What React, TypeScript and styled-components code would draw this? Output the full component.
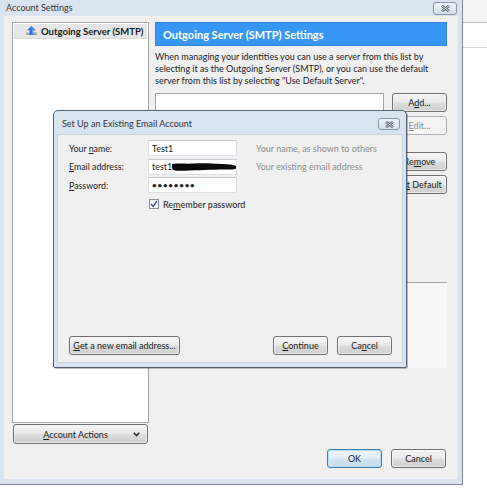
import React from "react";
import styled, { createGlobalStyle, css } from "styled-components";

const GlobalStyle = createGlobalStyle`
  html, body { margin: 0; padding: 0; background: #ffffff; }
  body {
    font-family: Lato, "Noto Sans", "DejaVu Sans", sans-serif;
    font-size: 9px;
    color: #1b1b1b;
  }
  * { box-sizing: border-box; }
`;

const Desktop = styled.div`
  position: relative;
  width: 487px;
  height: 500px;
  overflow: hidden;
  background: #ffffff;
`;

/* another application window peeking out at the right edge */
const BackWindow = styled.div`
  position: absolute;
  left: 463px;
  top: 0;
  width: 24px;
  display: flex;
  flex-direction: column;
`;

const BackBar = styled.div<{ $h: number; $line: string; $bg: string }>`
  height: ${(p) => p.$h}px;
  background: ${(p) => p.$bg};
  border-bottom: 1px solid ${(p) => p.$line};
`;

const MainWindow = styled.div`
  position: absolute;
  left: 0;
  top: 0;
  width: 463px;
  height: 485px;
  background: #dae4f0;
  border-right: 1px solid #7e8896;
  border-bottom: 1px solid #7e8896;
  padding: 0 4px 5px 4px;
  display: flex;
  flex-direction: column;
`;

const TitleBar = styled.div<{ $h: number }>`
  height: ${(p) => p.$h}px;
  flex: none;
  display: flex;
  align-items: flex-start;
  justify-content: space-between;
`;

const TitleText = styled.div<{ $top: number; $left: number }>`
  margin-top: ${(p) => p.$top}px;
  margin-left: ${(p) => p.$left}px;
  font-size: 9px;
  line-height: 12px;
  color: #353535;
  white-space: nowrap;
`;

const CloseButton = styled.div<{ $w: number; $h: number; $top: number; $right: number }>`
  width: ${(p) => p.$w}px;
  height: ${(p) => p.$h}px;
  margin-top: ${(p) => p.$top}px;
  margin-right: ${(p) => p.$right}px;
  border: 1px solid #8796a9;
  border-radius: 3px;
  background: linear-gradient(#eef3f9, #d6dfeb);
  display: flex;
  align-items: center;
  justify-content: center;
`;

const Client = styled.div`
  flex: 1;
  background: #f0f0f0;
  display: flex;
  gap: 6px;
  padding: 6px 11px 11px 8px;
`;

const LeftColumn = styled.div`
  width: 137px;
  flex: none;
  display: flex;
  flex-direction: column;
  gap: 1px;
  padding-bottom: 24px;
`;

const AccountList = styled.div`
  flex: 1;
  background: #ffffff;
  border: 1px solid #a5a5a5;
  padding: 1px;
`;

const ListRow = styled.div`
  height: 15px;
  display: flex;
  align-items: center;
  gap: 4px;
  padding-left: 12px;
  background: #e6e6e6;
  border-bottom: 1px solid #dadada;
  font-weight: 700;
  font-size: 9.5px;
  color: #1a1a1a;
  white-space: nowrap;
`;

const buttonBase = css`
  display: flex;
  align-items: center;
  justify-content: center;
  border: 1px solid #707070;
  border-radius: 3px;
  background: linear-gradient(#f3f3f3 0%, #ebebeb 48%, #dddddd 52%, #cfcfcf 100%);
  box-shadow: inset 0 0 0 1px rgba(255, 255, 255, 0.55);
  font-size: 9px;
  color: #1b1b1b;
  white-space: nowrap;
`;

const ButtonFrame = styled.div<{ $w?: number; $h?: number; $default?: boolean; $disabled?: boolean }>`
  ${buttonBase};
  width: ${(p) => (p.$w ? `${p.$w}px` : "auto")};
  height: ${(p) => p.$h ?? 19}px;
  ${(p) =>
    p.$default &&
    css`
      border-color: #3c7fb1;
      box-shadow: inset 0 0 0 1px #b7dcf4;
      background: linear-gradient(#eef6fc 0%, #e2eef8 48%, #d2e4f3 52%, #c6dcef 100%);
    `}
  ${(p) =>
    p.$disabled &&
    css`
      border-color: #adb2b5;
      background: #f4f4f4;
      box-shadow: none;
      color: #8a8a8a;
    `}
`;

const Button = ({
  children,
  ...rest
}: {
  children: React.ReactNode;
  $w?: number;
  $h?: number;
  $default?: boolean;
  $disabled?: boolean;
}) => (
  <ButtonFrame {...rest}>
    <span>{children}</span>
  </ButtonFrame>
);

const ActionsButton = styled.div`
  ${buttonBase};
  height: 20px;
  margin: 0 1px;
  justify-content: space-between;
  padding: 0 7px 0 0;
`;

const ActionsLabel = styled.span`
  flex: 1;
  text-align: center;
  padding-left: 4px;
`;

const Key = styled.span`
  text-decoration: underline;
  text-underline-offset: 1px;
`;

const RightColumn = styled.div`
  flex: 1;
  display: flex;
  flex-direction: column;
`;

const Header = styled.div`
  height: 24px;
  flex: none;
  background: #3797f5;
  border: 1px solid #2f85dd;
  display: flex;
  align-items: center;
  padding-left: 7px;
  color: #ffffff;
  font-weight: 700;
  font-size: 11px;
  white-space: nowrap;
`;

const Description = styled.p`
  margin: 5px 0 0 0;
  font-size: 9px;
  line-height: 12px;
  color: #1b1b1b;
  white-space: nowrap;
`;

const ServerArea = styled.div`
  margin-top: 6px;
  display: flex;
  gap: 8px;
  height: 183px;
`;

const ServerList = styled.div`
  flex: 1;
  background: #ffffff;
  border: 1px solid #a5a5a5;
`;

const ButtonStack = styled.div`
  width: 55px;
  display: flex;
  flex-direction: column;
`;

const Gap = styled.div<{ $h: number }>`
  height: ${(p) => p.$h}px;
  flex: none;
`;

const Details = styled.div`
  margin-top: 6px;
  height: 86px;
  background: #f7f7f7;
  border-top: 1px solid #a5a5a5;
`;

const Footer = styled.div`
  margin-top: auto;
  display: flex;
  justify-content: flex-end;
  gap: 9px;
  padding-right: 1px;
`;

/* ---------- dialog ---------- */

const Dialog = styled.div`
  position: absolute;
  left: 53px;
  top: 110px;
  width: 354px;
  height: 258px;
  background: #d8e4f2;
  border: 1px solid #55616f;
  border-radius: 5px 5px 2px 2px;
  box-shadow: 1px 1px 0 rgba(0, 0, 0, 0.25);
  padding: 0 3px 4px 3px;
  display: flex;
  flex-direction: column;
`;

const DialogBody = styled.div`
  flex: 1;
  background: #f0f0f0;
  border: 1px solid #c4d2e3;
  padding: 5px 10px 7px 11px;
  display: flex;
  flex-direction: column;
`;

const FormGrid = styled.div`
  display: grid;
  grid-template-columns: 79px 89px auto;
  grid-auto-rows: 16px;
  row-gap: 2.5px;
  align-items: center;
`;

const Label = styled.div`
  font-size: 8.8px;
  color: #1b1b1b;
  white-space: nowrap;
`;

const TextBox = styled.div`
  height: 16px;
  background: #ffffff;
  border: 1px solid #dcdfe4;
  border-top-color: #c6c9cf;
  display: flex;
  align-items: center;
  padding-left: 3px;
  font-size: 9px;
  color: #1b1b1b;
  overflow: hidden;
  white-space: nowrap;
`;

const Dots = styled.span`
  font-size: 8px;
  letter-spacing: 0.8px;
  font-weight: 700;
`;

const Hint = styled.div`
  margin-left: 19px;
  font-size: 9px;
  color: #8e8e8e;
  white-space: nowrap;
`;

const CheckRow = styled.div`
  grid-column: 2 / 4;
  display: flex;
  align-items: center;
  gap: 4px;
  margin-left: 1px;
  margin-top: 1px;
  font-size: 9px;
  white-space: nowrap;
`;

const CheckBox = styled.div`
  width: 10px;
  height: 10px;
  border: 1px solid #8e8f8f;
  background: linear-gradient(#f1f1f1, #ffffff);
  display: flex;
  align-items: center;
  justify-content: center;
`;

const DialogFooter = styled.div`
  margin-top: auto;
  display: flex;
  gap: 9px;
`;

const FooterSpacer = styled.div`
  flex: 1;
`;

/* ---------- drawings ---------- */

const CloseGlyph = () => (
  <svg width="9" height="7" viewBox="0 0 9 7">
    <path d="M1 0.8 L8 6.2 M8 0.8 L1 6.2" stroke="#4f5c6c" strokeWidth="2.6" />
    <path d="M1 0.8 L8 6.2 M8 0.8 L1 6.2" stroke="#eef2f7" strokeWidth="0.9" />
  </svg>
);

const ServerIcon = () => (
  <svg width="11" height="10" viewBox="0 0 11 10">
    <rect x="0" y="6" width="11" height="3" fill="#9aa7b5" />
    <rect x="0" y="6" width="11" height="1" fill="#c3ccd6" />
    <path d="M5.5 0 L10 4.2 L7.4 4.2 L7.4 9 L3.6 9 L3.6 4.2 L1 4.2 Z" fill="#2f74d9" />
    <path d="M5.5 1 L8.5 4 L6.6 4 L6.6 8" stroke="#7fb3f2" strokeWidth="0.8" fill="none" />
  </svg>
);

const Chevron = () => (
  <svg width="7" height="5" viewBox="0 0 7 5">
    <path d="M0.8 0.8 L3.5 3.6 L6.2 0.8" stroke="#2a2a2a" strokeWidth="1.6" fill="none" />
  </svg>
);

const CheckMark = () => (
  <svg width="8" height="8" viewBox="0 0 8 8">
    <path d="M1 4 L3.2 6.4 L7 1" stroke="#3c5497" strokeWidth="1.5" fill="none" />
  </svg>
);

const Redaction = () => (
  <svg width="66" height="10" viewBox="0 0 66 10" style={{ flex: "none" }}>
    <path
      d="M0 2 C8 1 14 2 22 1.5 C34 1 46 2 58 2.5 C62 3 65 4 65 5.5 C65 7 62 7.5 58 7.5 C46 7.5 30 8 18 8.5 C10 9 4 9 1 8 C-0.5 6 -0.5 3 0 2 Z"
      fill="#0a0a0a"
    />
  </svg>
);

export default function App() {
  return (
    <Desktop>
      <GlobalStyle />
      <BackWindow>
        <BackBar $h={23} $bg="#f5f5f5" $line="#b8b8b8" />
        <BackBar $h={25} $bg="#ffffff" $line="#d6d6d6" />
      </BackWindow>

      <MainWindow>
        <TitleBar $h={16}>
          <TitleText $top={2} $left={2}>
            Account Settings
          </TitleText>
          <CloseButton $w={24} $h={13} $top={2} $right={1}>
            <CloseGlyph />
          </CloseButton>
        </TitleBar>
        <Client>
          <LeftColumn>
            <AccountList>
              <ListRow>
                <ServerIcon />
                <span>Outgoing Server (SMTP)</span>
              </ListRow>
            </AccountList>
            <ActionsButton>
              <ActionsLabel>
                <Key>A</Key>ccount Actions
              </ActionsLabel>
              <Chevron />
            </ActionsButton>
          </LeftColumn>

          <RightColumn>
            <Header>Outgoing Server (SMTP) Settings</Header>
            <Description>
              When managing your identities you can use a server from this list by
              <br />
              selecting it as the Outgoing Server (SMTP), or you can use the default
              <br />
              server from this list by selecting "Use Default Server".
            </Description>
            <ServerArea>
              <ServerList />
              <ButtonStack>
                <Button>
                  A<Key>d</Key>d...
                </Button>
                <Gap $h={4} />
                <Button $disabled>
                  <Key>E</Key>dit...
                </Button>
                <Gap $h={17} />
                <Button>
                  Re<Key>m</Key>ove
                </Button>
                <Gap $h={4} />
                <Button>
                  Se<Key>t</Key> Default
                </Button>
              </ButtonStack>
            </ServerArea>
            <Details />
            <Footer>
              <Button $w={55} $default>
                OK
              </Button>
              <Button $w={55}>Cancel</Button>
            </Footer>
          </RightColumn>
        </Client>
      </MainWindow>

      <Dialog>
        <TitleBar $h={23}>
          <TitleText $top={7} $left={5}>
            Set Up an Existing Email Account
          </TitleText>
          <CloseButton $w={22} $h={12} $top={7} $right={3}>
            <CloseGlyph />
          </CloseButton>
        </TitleBar>
        <DialogBody>
          <FormGrid>
            <Label>
              Your <Key>n</Key>ame:
            </Label>
            <TextBox>Test1</TextBox>
            <Hint>Your name, as shown to others</Hint>

            <Label>
              <Key>E</Key>mail address:
            </Label>
            <TextBox>
              <span>test1</span>
              <Redaction />
            </TextBox>
            <Hint>Your existing email address</Hint>

            <Label>
              <Key>P</Key>assword:
            </Label>
            <TextBox>
              <Dots>••••••••</Dots>
            </TextBox>
            <div />

            <CheckRow>
              <CheckBox>
                <CheckMark />
              </CheckBox>
              <span>
                Re<Key>m</Key>ember password
              </span>
            </CheckRow>
          </FormGrid>
          <DialogFooter>
            <Button $w={111}>
              <Key>G</Key>et a new email address...
            </Button>
            <FooterSpacer />
            <Button $w={55}>
              <Key>C</Key>ontinue
            </Button>
            <Button $w={55}>
              Ca<Key>n</Key>cel
            </Button>
          </DialogFooter>
        </DialogBody>
      </Dialog>
    </Desktop>
  );
}
